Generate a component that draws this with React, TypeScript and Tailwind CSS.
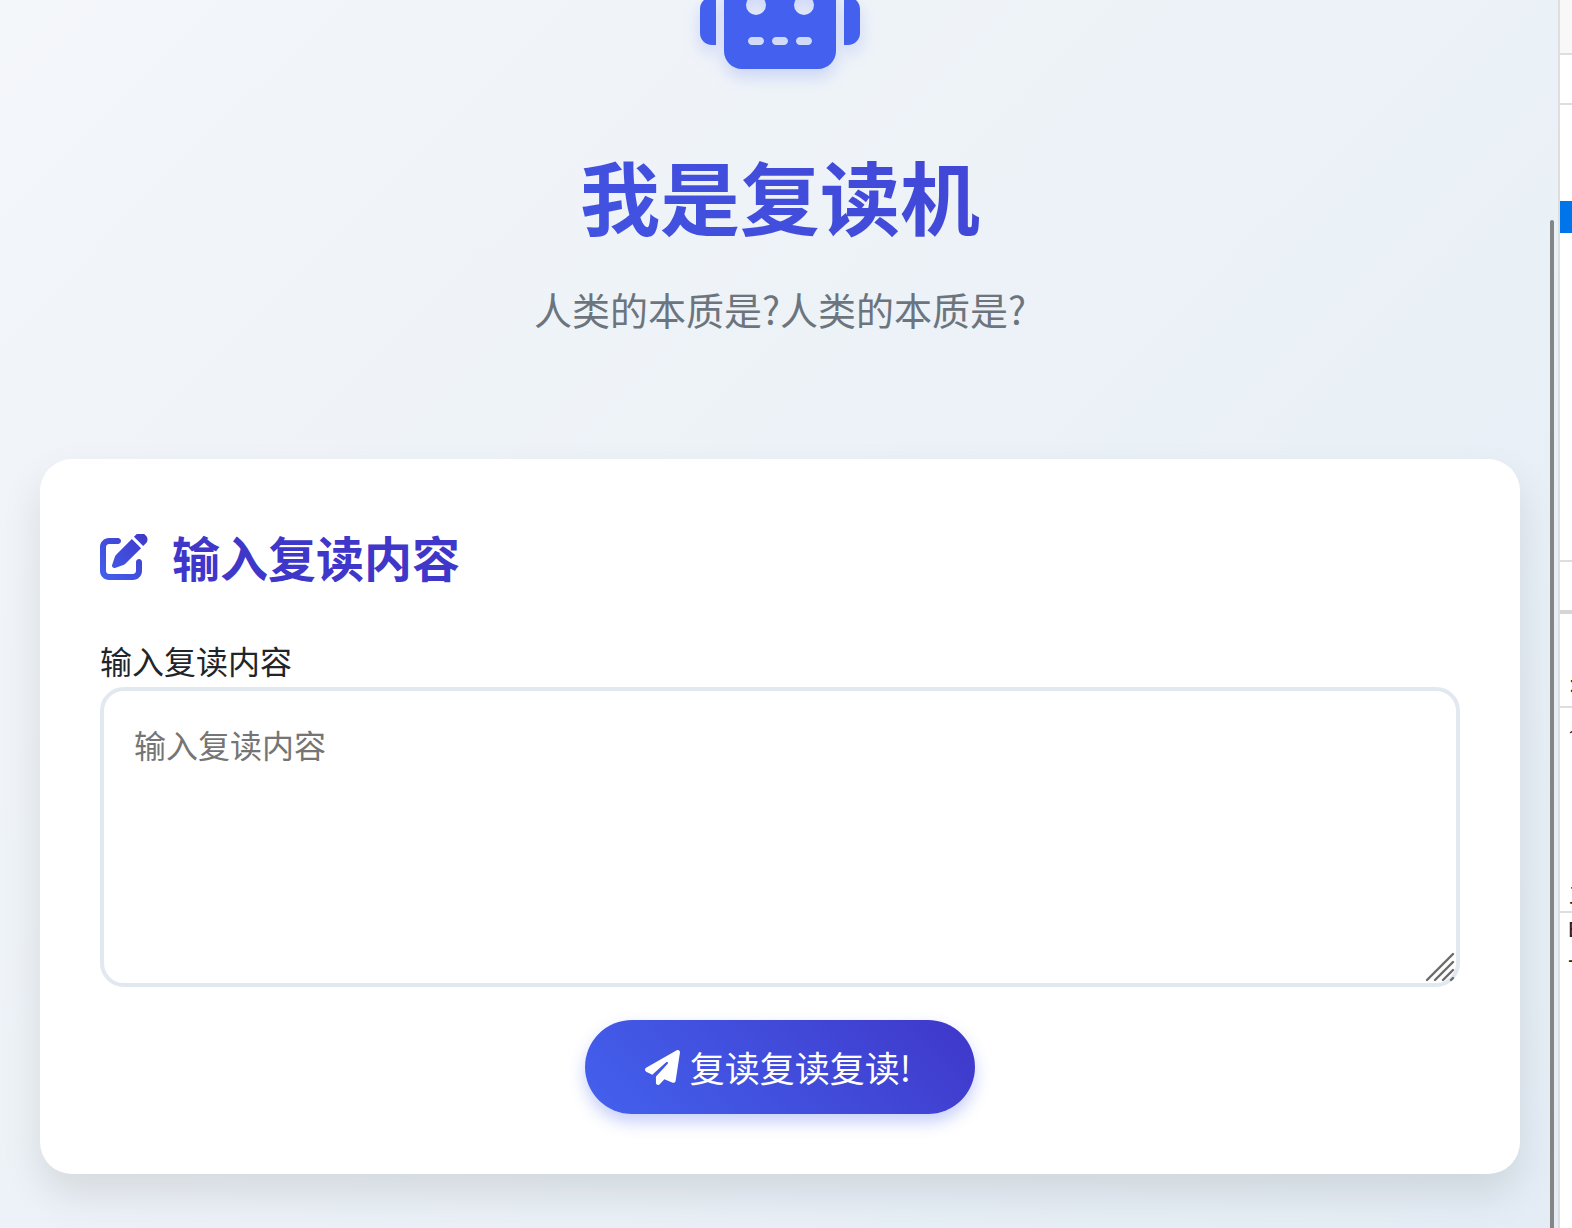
import { useState } from "react";
import { FaPaperPlane, FaPenToSquare, FaRobot } from "react-icons/fa6";

function ResizeGrip() {
  return (
    <svg
      viewBox="0 0 30 30"
      aria-hidden="true"
      className="pointer-events-none absolute right-[5px] bottom-[5px] size-[30px]"
      stroke="#6a6a6a"
      strokeWidth="2.4"
      strokeLinecap="round"
    >
      <path d="M2 28 28 2M10 28 28 10M18 28 28 18M26 28l2-2" />
    </svg>
  );
}

// Sliver of the docked panel, its border overlaps the page by 2px
function SidePanel() {
  return (
    <aside className="relative -ml-0.5 flex h-full w-3.5 shrink-0 flex-col overflow-hidden border-l-2 border-[#dedede] bg-white font-['Liberation_Sans','Noto_Sans_CJK_SC',sans-serif] text-[22px] leading-[30px] whitespace-nowrap text-[#222]">
      <div className="h-[55px] shrink-0 border-b-2 border-[#dedede] bg-[#f8f8f8]" />
      <div className="h-[50px] shrink-0 border-b-2 border-[#dedede]" />
      <div className="mt-24 h-8 shrink-0 bg-[#0075eb]" />
      <div className="h-[329px] shrink-0 border-b-2 border-[#dedede]" />
      <div className="h-[52px] shrink-0 border-b-4 border-[#d5d6da]" />
      <div className="h-[94px] shrink-0 overflow-hidden border-b-2 border-[#dedede] pt-14 pl-[9px]">:</div>
      <div className="flex h-[205px] shrink-0 flex-col justify-between overflow-hidden border-b-2 border-[#dedede] pt-2.5 pl-[9px]">
        <span>~</span>
        <span>工</span>
      </div>
      <div className="flex flex-col pt-0.5 pl-2">
        <span>E</span>
        <span>-</span>
      </div>
    </aside>
  );
}

export default function App() {
  const [content, setContent] = useState("");

  return (
    <div className="flex h-screen overflow-hidden font-['Noto_Sans_CJK_SC',sans-serif] text-[#212529]">
      <div className="relative min-w-0 flex-1 overflow-hidden">
        <main className="-mt-[269px] min-h-[1497px] bg-linear-135 from-[#f5f7fa] to-[#e4edf5] px-10 pt-[210px] pb-[54px]">
          <header className="flex flex-col items-center text-center">
            <FaRobot
              aria-hidden="true"
              className="h-32 w-40 text-[#4361ee] drop-shadow-[0_8px_8px_rgba(67,97,238,0.2)]"
            />
            <h1 className="mt-[77px] w-full bg-linear-45 from-[#4361ee] to-[#3f37c9] bg-clip-text text-[80px] leading-24 font-bold text-transparent">
              我是复读机
            </h1>
            <p className="mt-[37px] text-[38px] leading-[60px] text-[#6c757d]">
              人类的本质是?人类的本质是?
            </p>
          </header>

          <section className="mt-[120px] rounded-[32px] bg-white p-[60px] shadow-[0_20px_40px_rgba(0,0,0,0.1)]">
            <h2 className="flex items-center gap-6 text-5xl leading-[74px] font-bold text-[#3f37c9]">
              <svg className="absolute size-0" aria-hidden="true">
                <linearGradient id="brand" x1="0" y1="1" x2="1" y2="0">
                  <stop offset="0" stopColor="#4361ee" />
                  <stop offset="1" stopColor="#3f37c9" />
                </linearGradient>
              </svg>
              <FaPenToSquare
                fill="url(#brand)"
                aria-hidden="true"
                className="size-12 [clip-path:inset(2px_0_0_0)]"
              />
              输入复读内容
            </h2>

            <form className="mt-11" onSubmit={(e) => e.preventDefault()}>
              <label htmlFor="content" className="mb-1 block text-[32px] leading-[46px]">
                输入复读内容
              </label>
              <div className="relative">
                <textarea
                  id="content"
                  value={content}
                  onChange={(e) => setContent(e.target.value)}
                  placeholder="输入复读内容"
                  className="block h-[300px] w-full resize-none rounded-3xl border-4 border-[#e2e8f0] bg-white p-[30px] text-[32px] leading-[46px] outline-none placeholder:text-[#757575]"
                />
                <ResizeGrip />
              </div>
              <button
                type="submit"
                className="mx-auto mt-[33px] flex h-[94px] items-center gap-2.5 rounded-full bg-linear-45 from-[#4361ee] to-[#3f37c9] pr-16 pl-[60px] text-[35px] text-white shadow-[0_8px_16px_rgba(67,97,238,0.3)]"
              >
                <FaPaperPlane aria-hidden="true" className="size-[35px]" />
                复读复读复读!
              </button>
            </form>
          </section>
        </main>
        {/* Scroll thumb */}
        <div className="absolute top-[220px] right-1.5 bottom-0 w-1 rounded-t-full bg-[#858585]" />
      </div>
      <SidePanel />
    </div>
  );
}
